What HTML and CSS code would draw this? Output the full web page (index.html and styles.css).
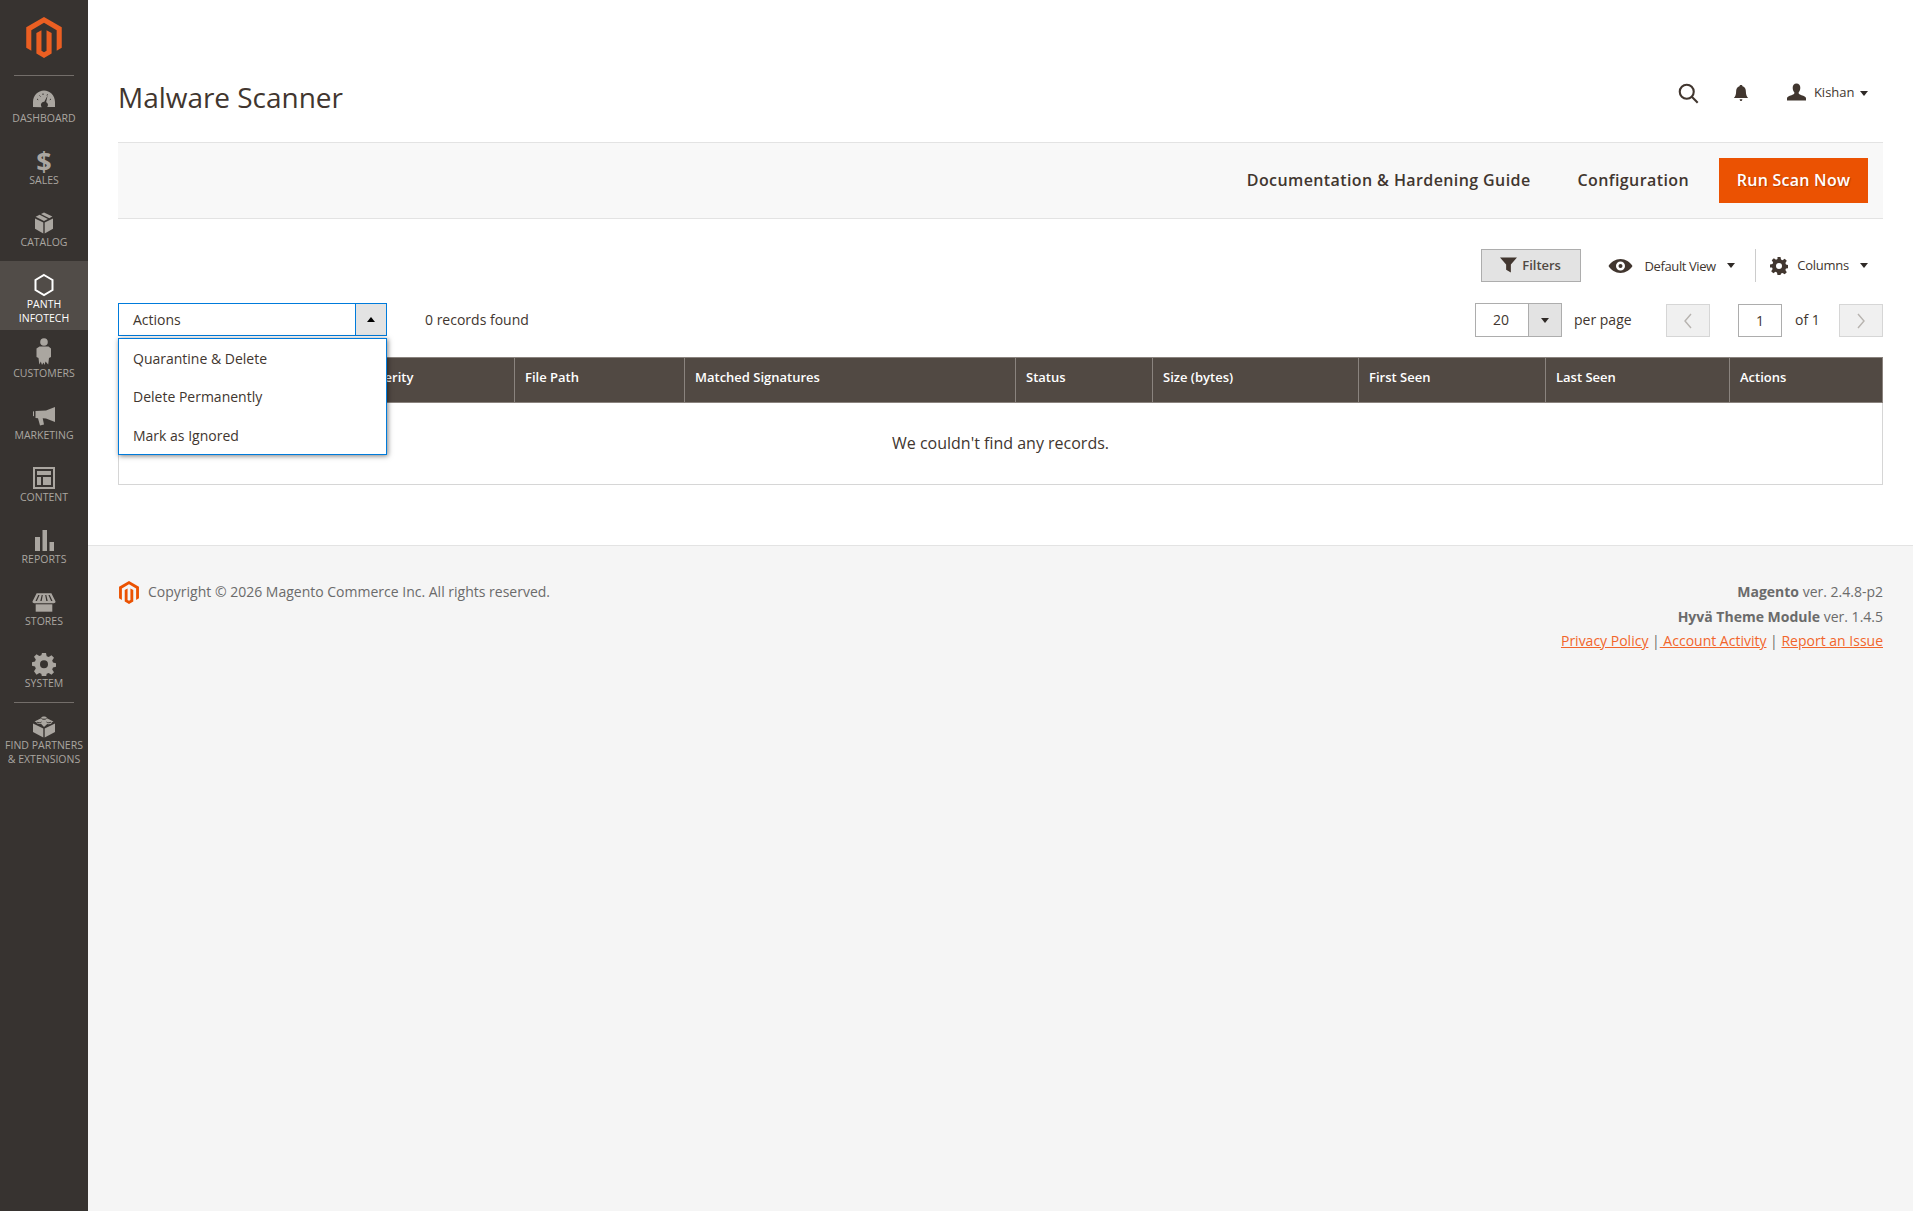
FILE: index.html
```html
<!DOCTYPE html>
<html lang="en">
<head>
<meta charset="utf-8">
<title>Malware Scanner</title>
<link rel="stylesheet" href="styles.css">
</head>
<body>
<div class="shell">
  <nav class="sidebar">
    <div class="logo-wrap">
      <svg class="logo" viewBox="1.6 0 20.8 24"><path fill="#eb5f22" d="M12 24l-4.455-2.572v-12l2.97-1.715v12.001l1.485.902 1.485-.902V7.713l2.97 1.715v12L12 24zM22.391 6v12l-2.969 1.714V7.713L12 3.43 4.574 7.713v12.001L1.609 18V6L12 0l10.391 6z"/></svg>
    </div>
    <ul class="menu">
      <li class="item"><svg class="ico" viewBox="0 0 24 24"><path d="M1 20v-5C1 8.500 6 3.500 12 3.500S23 8.500 23 15v5h-7.800c.6-.8.9-1.700.7-2.700-.2-1-.9-1.700-1.800-2.100l1.500-6.700-3.300 6.200c-1.900-.1-3.400 1.400-3.400 3.100 0 .9.300 1.700.9 2.400z"/><path class="ticks" d="M5 12l1.200.8M7.500 8.500l1 1M11 6.500v1.500M15.500 7.300l-.5 1.200M19 12l-1.200.8"/></svg><span>Dashboard</span></li>
      <li class="item"><b class="dollar">$</b><span>Sales</span></li>
      <li class="item"><svg class="ico" viewBox="0 0 24 24"><path d="M11.300 11.500 3 7.500v10.300l8.300 4.700zM12.700 11.500v11l8.300-4.700V7.500zM3.600 5.800 7.600 3.700l8.300 4.200-3.900 2zM17.300 7.200 9 3l3-1.500 8.400 4z"/></svg><span>Catalog</span></li>
      <li class="item active"><svg class="ico" viewBox="0 0 24 24"><path class="hex" d="M12 2 20.500 7v10L12 22l-8.500-5V7z"/></svg><span>Panth<br>Infotech</span></li>
      <li class="item"><svg class="ico tall" viewBox="0 0 24 28"><circle cx="12" cy="4" r="3.800"/><path d="M7.500 8.500h9l2.500 2v8.500l-2 1-.8 6.500-2.700-3-1 3.500-1-2.500-1.500 2.500-1.200-3.500-1.500 3-.8-6.500-2-1v-8.500z"/></svg><span>Customers</span></li>
      <li class="item"><svg class="ico" viewBox="0 0 24 24"><path d="M1 7.500l1-.2v5l-1-.2zM3.500 7 14 6.500 23 3v15l-9-3.500-3.300-.2L12 20.500l-4 1-2-7.300-2.500-.3z"/></svg><span>Marketing</span></li>
      <li class="item"><svg class="ico" viewBox="0 0 24 24"><path fill-rule="evenodd" d="M1 1h22v22H1zM3 3v18h18V3zM5 5h14v4H5zM5 11h4v8H5zM11 11h8v8h-8z"/></svg><span>Content</span></li>
      <li class="item"><svg class="ico" viewBox="0 0 24 24"><path d="M3 9h5v14H3zM10.500 2H15v21h-4.500zM17.500 14H22v9h-4.500z"/></svg><span>Reports</span></li>
      <li class="item"><svg class="ico" viewBox="0 0 26 24"><path fill-rule="evenodd" d="M5 2.500h16l4.500 9c0 1.200-.8 1.800-2 1.800H2.500c-1.200 0-2-.6-2-1.800zM6.800 4.500 3.800 11h1.500l2.900-6.500zM10.500 4.500 9 11h1.500l1.200-6.500zM14.300 4.500 15.500 11H17l-1.500-6.500zM17.800 4.500 20.700 11h1.500L19.200 4.500z"/><path d="M4 14.500h18v8H4z"/></svg><span>Stores</span></li>
      <li class="item"><svg class="ico" viewBox="0 0 24 24"><path fill-rule="evenodd" d="M10 1h4l.7 3.200 2 .8 2.800-1.800 2.500 2.500-1.800 2.800.8 2 3 .7v3.600l-3 .7-.8 2 1.800 2.800-2.500 2.500-2.800-1.800-2 .8-.7 3.200h-4l-.7-3.200-2-.8-2.800 1.800L2 19.300l1.800-2.800-.8-2-3-.7v-3.600l3-.7.8-2L2 4.700 4.500 2.200l2.800 1.800 2-.8zM12 8.200a4 4 0 1 0 0 8 4 4 0 0 0 0-8z"/></svg><span>System</span></li>
      <li class="item partners"><svg class="ico" viewBox="0 0 24 24"><path d="M11.300 14.500 1 9.500V18l10.300 5.500zM12.700 14.500 23 9.500V18l-10.300 5.500zM12 2.500c1.600 0 2.800.6 2.800 1.400l.1.300 6.600 3.300-1.900 1c.3.900-.9 1.700-2.600 1.700-.7 0-1.300-.1-1.800-.3L12 13 9 9.700c-.5.200-1.100.3-1.800.3-1.700 0-2.900-.8-2.600-1.700L2.500 7.500l6.600-3.300.1-.3c0-.8 1.200-1.400 2.800-1.400z"/><path class="ticks" d="M9.500 4.500c.5 1 4.500 1 5 0M5 8c.5 1 4 1 4.500 0M14.500 8c.5 1 4 1 4.500 0"/></svg><span>Find Partners<br>&amp; Extensions</span></li>
    </ul>
  </nav>

  <div class="main">
    <div class="content">
      <header class="page-head">
        <h1 class="page-title">Malware Scanner</h1>
        <div class="head-tools">
          <svg class="tool-search" viewBox="0 0 24 24"><circle cx="10" cy="10" r="8"/><path d="M15.500 15.500 22.500 22.500"/></svg>
          <svg class="tool-bell" viewBox="0 0 18 20"><path d="M9 1c1 0 1.600.6 1.700 1.500C13.500 3.300 14.500 5.500 14.500 8.500c0 3 .8 5 2.500 7H1c1.700-2 2.500-4 2.500-7 0-3 1-5.200 3.800-6C7.400 1.600 8 1 9 1zM7.500 17h3c0 1-.6 2-1.500 2s-1.500-1-1.500-2z"/></svg>
          <div class="user">
            <svg class="tool-user" viewBox="0 0 20 18"><path d="M10 0c2.600 0 4 1.900 4 4.500 0 2-.8 3.800-1.700 4.800-.3 1.600.3 2 3 3 2.500.9 4.700 1.500 4.700 3.200V18H0v-2.500c0-1.700 2.200-2.300 4.700-3.200 2.700-1 3.300-1.400 3-3C6.800 8.300 6 6.500 6 4.500 6 1.900 7.400 0 10 0z"/></svg>
            <span class="user-name">Kishan</span><i class="caret"></i>
          </div>
        </div>
      </header>

      <div class="action-bar">
        <a class="bar-link">Documentation &amp; Hardening Guide</a>
        <a class="bar-link last">Configuration</a>
        <button class="primary">Run Scan Now</button>
      </div>

      <div class="grid-tools">
        <button class="filters"><svg class="filter-ico" viewBox="0 0 18 16"><path d="M0 0h18l-6.500 7.500V16l-5-3V7.500z"/></svg>Filters</button>
        <div class="tool default-view">
          <svg class="eye" viewBox="0 0 24 14"><path fill-rule="evenodd" d="M12 0c5 0 9.500 3 12 7-2.500 4-7 7-12 7S2.500 11 0 7c2.500-4 7-7 12-7zM12 2.500a4.500 4.500 0 1 0 0 9 4.500 4.500 0 0 0 0-9zM12 5a2 2 0 1 1 0 4 2 2 0 0 1 0-4z"/></svg>
          <span class="dv-text">Default View</span><i class="caret wide"></i>
        </div>
        <div class="tool columns">
          <svg class="gear" viewBox="0 0 24 24"><path fill-rule="evenodd" d="M10 0h4l.7 3.400 2 .8 2.900-1.900 2.800 2.800-1.900 2.900.8 2 3.400.7v4l-3.400.7-.8 2 1.900 2.900-2.800 2.800-2.900-1.900-2 .8L14 24h-4l-.7-3.400-2-.8-2.900 1.900-2.800-2.800 1.900-2.900-.8-2L0 14v-4l3.400-.7.8-2-1.900-2.900 2.800-2.800 2.900 1.900 2-.8zM12 8a4 4 0 1 0 0 8 4 4 0 0 0 0-8z"/></svg>
          <span class="col-text">Columns</span><i class="caret wide"></i>
        </div>
      </div>

      <div class="pager-row">
        <div class="actions">
          <div class="actions-select">
            <span class="actions-label">Actions</span>
            <span class="actions-toggle"><i class="caret up"></i></span>
          </div>
          <ul class="actions-menu">
            <li>Quarantine &amp; Delete</li>
            <li>Delete Permanently</li>
            <li>Mark as Ignored</li>
          </ul>
        </div>
        <span class="records">0 records found</span>
        <div class="pager">
          <div class="perpage"><span class="perpage-val">20</span><span class="perpage-toggle"><i class="caret"></i></span></div>
          <span class="perpage-label">per page</span>
          <button class="nav-btn prev"><svg viewBox="0 0 10 16"><path d="M8 1 2 8l6 7"/></svg></button>
          <span class="page-input">1</span>
          <span class="page-of">of 1</span>
          <button class="nav-btn next"><svg viewBox="0 0 10 16"><path d="M2 1l6 7-6 7"/></svg></button>
        </div>
      </div>

      <table class="grid">
        <thead>
          <tr>
            <th class="c-select"></th>
            <th class="c-sev">Severity</th>
            <th class="c-path">File Path</th>
            <th class="c-sig">Matched Signatures</th>
            <th class="c-status">Status</th>
            <th class="c-size">Size (bytes)</th>
            <th class="c-first">First Seen</th>
            <th class="c-last">Last Seen</th>
            <th>Actions</th>
          </tr>
        </thead>
        <tbody>
          <tr><td colspan="9" class="empty">We couldn't find any records.</td></tr>
        </tbody>
      </table>
    </div>

    <footer class="footer">
      <div class="copy">
        <svg class="foot-logo" viewBox="1.6 0 20.800 24"><path fill="#eb5202" d="M12 24l-4.455-2.572v-12l2.970-1.715v12.001l1.485.902 1.485-.902V7.713l2.970 1.715v12L12 24zM22.391 6v12l-2.969 1.714V7.713L12 3.430 4.574 7.713v12.001L1.609 18V6L12 0l10.391 6z"/></svg>
        <span>Copyright © 2026 Magento Commerce Inc. All rights reserved.</span>
      </div>
      <div class="legal">
        <p><b>Magento</b> ver. 2.4.8-p2</p>
        <p><b>Hyvä Theme Module</b> ver. 1.4.5</p>
        <p><a>Privacy Policy</a> |<a> Account Activity</a> | <a>Report an Issue</a></p>
      </div>
    </footer>
  </div>
</div>
</body>
</html>
```
FILE: styles.css
```css
* { box-sizing: border-box; }
html, body { margin: 0; padding: 0; height: 100%; }
body { font-family: "Open Sans", sans-serif; font-size: 14px; color: #41362f; background: #fff; }
ul { list-style: none; margin: 0; padding: 0; }
p { margin: 0; }
button { font-family: inherit; cursor: pointer; }

.shell { display: flex; min-height: 1211px; }

/* Sidebar */
.sidebar { width: 88px; flex: none; background: #373330; }
.logo-wrap { height: 76px; margin: 0 14px -1px; padding-top: 17px; border-bottom: 1px solid #736e6a; display: flex; justify-content: center; align-items: flex-start; }
.logo { width: 36px; height: 41px; }
.menu { display: flex; flex-direction: column; }
.item { height: 62px; display: flex; flex-direction: column; align-items: center; padding-top: 12px; color: #aaa6a0; font-size: 10.500px; line-height: 14px; text-transform: uppercase; text-align: center; white-space: nowrap; }
.item span { display: block; }
.ico { width: 24px; height: 24px; fill: #aaa6a0; flex: none; }
.ico.tall { height: 28px; margin-top: -4px; }
.ticks { fill: none; stroke: #373330; stroke-width: 1; }
.dollar { display: block; height: 24px; font-size: 27px; line-height: 24px; font-weight: 700; color: #aaa6a0; }
.item.active { height: 69px; background: #514c48; color: #fff; }
.hex { fill: none; stroke: #fff; stroke-width: 2; }
.item.partners { height: 70px; position: relative; }
.item.partners::before { content: ""; position: absolute; top: 0; left: 14px; right: 14px; height: 1px; background: #736e6a; }

/* Main */
.main { flex: 1; display: flex; flex-direction: column; min-width: 0; }
.content { padding: 0 30px; background: #fff; height: 545px; flex: none; }

.page-head { height: 142px; display: flex; align-items: flex-start; justify-content: space-between; padding-top: 77px; }
.page-title { margin: 0; font-size: 28px; font-weight: 400; line-height: 40px; letter-spacing: -.03px; color: #41362f; }
.head-tools { display: flex; align-items: center; height: 32px; padding-right: 15px; }
.tool-search { width: 21px; height: 21px; fill: none; stroke: #41362f; stroke-width: 2.400; margin-right: 34px; }
.tool-bell { width: 16px; height: 18px; fill: #41362f; margin-right: 38px; }
.user { display: flex; align-items: center; font-size: 13px; color: #41362f; }
.tool-user { width: 19px; height: 18px; fill: #41362f; margin-right: 8px; margin-bottom: 2px; }
.user-name { margin-bottom: 2px; margin-right: -2.500px; }

.caret { display: inline-block; width: 0; height: 0; border-left: 4px solid transparent; border-right: 4px solid transparent; border-top: 5px solid #2f2a27; margin-left: 8px; }
.caret.wide { margin-left: 11px; }
.caret.up { border-top: 0; border-bottom: 5px solid #000; margin: 0; }

.action-bar { height: 77px; background: #f8f8f8; border-top: 1px solid #e3e3e3; border-bottom: 1px solid #e3e3e3; display: flex; align-items: center; justify-content: flex-end; padding: 0 15px; }
.bar-link { font-size: 16px; font-weight: 600; letter-spacing: .4px; color: #41362f; margin-right: 47px; padding-bottom: 2px; }
.bar-link.last { margin-right: 30px; }
.primary { width: 149px; height: 45px; background: #eb5202; border: 0; color: #fff; font-size: 16px; font-weight: 600; letter-spacing: .25px; text-shadow: 1px 1px 1px rgba(0,0,0,.25); padding: 0 0 2px; }

.grid-tools { display: flex; justify-content: flex-end; align-items: center; height: 33px; margin-top: 30px; font-size: 13px; }
.filters { width: 100px; height: 33px; background: #e3e3e3; border: 1px solid #adadad; color: #514943; font-size: 13px; font-weight: 600; display: flex; align-items: center; justify-content: center; padding: 0 0 1px; margin-right: 27px; }
.filter-ico { width: 17px; height: 16px; fill: #41362f; margin-right: 5px; }
.tool { display: flex; align-items: center; color: #41362f; height: 33px; }
.default-view { padding-right: 20px; border-right: 1px solid #ccc; }
.dv-text { letter-spacing: -.4px; }
.eye { width: 25px; height: 14px; fill: #41362f; margin-right: 12px; }
.columns { padding-left: 14px; padding-right: 15px; }
.col-text { letter-spacing: -.25px; margin-bottom: 2px; }
.gear { width: 18px; height: 18px; fill: #41362f; margin-right: 9.500px; }

.pager-row { display: flex; align-items: center; height: 33px; margin-top: 21px; }
.actions { position: relative; width: 269px; height: 33px; flex: none; }
.actions-select { display: flex; height: 33px; border: 1px solid #007bdb; background: #fff; }
.actions-label { flex: 1; padding-left: 14px; line-height: 31px; }
.actions-toggle { width: 31px; background: #e3e3e3; border-left: 1px solid #007bdb; display: flex; align-items: center; justify-content: center; }
.actions-menu { position: absolute; z-index: 5; left: 0; right: 0; top: 35px; height: 117px; background: #fff; border: 1px solid #007bdb; box-shadow: 1px 1px 5px rgba(0,0,0,.5); padding: 1px 14px 0; }
.actions-menu li { height: 38.300px; line-height: 38.300px; }
.records { margin-left: 38px; }
.pager { margin-left: auto; display: flex; align-items: flex-start; height: 34px; align-self: flex-start; line-height: 34px; }
.perpage { display: flex; width: 87px; height: 34px; border: 1px solid #adadad; }
.perpage-val { flex: 1; text-align: center; line-height: 32px; padding-right: 2px; }
.perpage-toggle { width: 33px; background: #e3e3e3; border-left: 1px solid #adadad; display: flex; align-items: center; justify-content: center; }
.perpage-toggle .caret { margin: 0; }
.perpage-label { margin-left: 12px; width: 57px; white-space: nowrap; }
.nav-btn { width: 44px; height: 33px; background: #f0f0f0; border: 1px solid #d6d6d6; padding: 0; display: flex; align-items: center; justify-content: center; margin: 1px 0 0 35px; }
.nav-btn svg { width: 10px; height: 16px; fill: none; stroke: #b7b3af; stroke-width: 1.400; }
.nav-btn.next { margin-left: 22px; }
.page-input { width: 44px; height: 33px; margin: 1px 0 0 28px; border: 1px solid #adadad; text-align: center; line-height: 31px; }
.page-of { margin-left: 13px; width: 22px; white-space: nowrap; }

.grid { width: 100%; table-layout: fixed; border-collapse: collapse; margin-top: 21px; }
.grid th { height: 45px; padding: 0 10px 7px; background: #514943; color: #fff; font-size: 13px; font-weight: 600; text-align: left; border: 1px solid #8a837e; }
.c-select { width: 234px; }
.c-sev { width: 162px; }
.c-path { width: 170px; }
.c-sig { width: 331px; }
.c-status { width: 137px; }
.c-size { width: 206px; }
.c-first { width: 187px; }
.c-last { width: 184px; }
.empty { height: 82px; text-align: center; font-size: 16px; color: #41362f; border: 1px solid #d6d6d6; border-top: 0; padding: 0 0 2px; }

/* Footer */
.footer { flex: 1; background: #f5f5f5; border-top: 1px solid #e3e3e3; padding: 34px 30px 0; display: flex; justify-content: space-between; align-items: flex-start; color: #6b6b6b; font-size: 14px; line-height: 24.500px; }
.copy { display: flex; align-items: center; height: 24px; }
.foot-logo { width: 20px; height: 23px; margin: 0 9px 0 1px; }
.legal { text-align: right; }
.legal a { color: #f2652b; text-decoration: underline; }
```
